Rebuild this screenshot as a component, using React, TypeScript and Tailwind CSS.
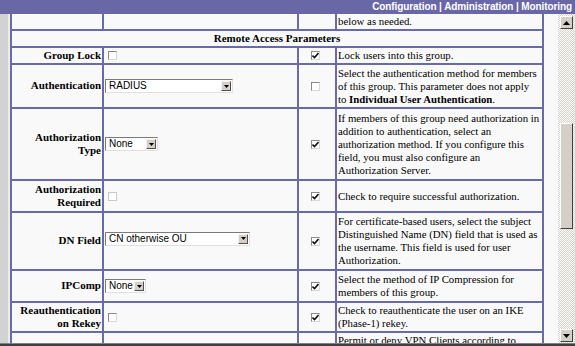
import type { ReactNode } from 'react'

const SERIF = "font-['Liberation_Serif','Times_New_Roman',serif]"
const SANS = "font-['Liberation_Sans',Arial,sans-serif]"

function Box({ checked = false, dim = false }: { checked?: boolean; dim?: boolean }) {
  return (
    <span
      className={`inline-flex w-[9px] h-[9px] border ${
        dim ? 'border-[#c8c8c8]' : 'border-t-[#8a8a8a] border-l-[#8a8a8a] border-b-[#d8d8d8] border-r-[#d8d8d8]'
      } bg-white items-center justify-center`}
    >
      {checked && (
        <svg width="7" height="7" viewBox="0 0 7 7">
          <path d="M0.5 3.5 L2.5 5.5 L6.5 1" stroke="#111" strokeWidth="1.6" fill="none" />
        </svg>
      )}
    </span>
  )
}

function Sel({ value, w }: { value: string; w: string }) {
  return (
    <div className={`${w} h-[14px] flex items-stretch bg-white border border-t-[#7a7a7a] border-l-[#7a7a7a] border-b-[#e0e0e0] border-r-[#e0e0e0]`}>
      <span className={`${SANS} flex-1 text-[10px] leading-[12px] pl-[3px] text-black whitespace-nowrap overflow-hidden`}>{value}</span>
      <span className="w-[10px] my-[1px] mr-[1px] bg-[#d4d0c8] border border-t-[#f4f4f4] border-l-[#f4f4f4] border-b-[#505050] border-r-[#505050] flex items-center justify-center">
        <svg width="5" height="3" viewBox="0 0 5 3">
          <path d="M0 0 H5 L2.5 3 Z" fill="#000" />
        </svg>
      </span>
    </div>
  )
}

type Row = {
  label: string[]
  h: string
  input: ReactNode
  inherit: boolean
  desc: ReactNode[]
}

const rows: Row[] = [
  {
    label: ['Group Lock'],
    h: 'h-[15px]',
    input: <span className="pl-[4px] flex"><Box /></span>,
    inherit: true,
    desc: ['Lock users into this group.'],
  },
  {
    label: ['Authentication'],
    h: 'h-[42px]',
    input: <span className="pl-[1px] flex"><Sel value="RADIUS" w="w-[128px]" /></span>,
    inherit: false,
    desc: [
      'Select the authentication method for members',
      'of this group. This parameter does not apply',
      <>to <b>Individual User Authentication</b>.</>,
    ],
  },
  {
    label: ['Authorization', 'Type'],
    h: 'h-[70px]',
    input: <span className="pl-[1px] flex"><Sel value="None" w="w-[53px]" /></span>,
    inherit: true,
    desc: [
      'If members of this group need authorization in',
      'addition to authentication, select an',
      'authorization method. If you configure this',
      'field, you must also configure an',
      'Authorization Server.',
    ],
  },
  {
    label: ['Authorization', 'Required'],
    h: 'h-[30px]',
    input: <span className="pl-[4px] flex"><Box dim /></span>,
    inherit: true,
    desc: ['Check to require successful authorization.'],
  },
  {
    label: ['DN Field'],
    h: 'h-[56px]',
    input: <span className="pl-[1px] pb-[5px] flex"><Sel value="CN otherwise OU" w="w-[145px]" /></span>,
    inherit: true,
    desc: [
      'For certificate-based users, select the subject',
      'Distinguished Name (DN) field that is used as',
      'the username. This field is used for user',
      'Authorization.',
    ],
  },
  {
    label: ['IPComp'],
    h: 'h-[30px]',
    input: <span className="pl-[1px] flex"><Sel value="None" w="w-[41px]" /></span>,
    inherit: true,
    desc: ['Select the method of IP Compression for', 'members of this group.'],
  },
  {
    label: ['Reauthentication', 'on Rekey'],
    h: 'h-[28px]',
    input: <span className="pl-[4px] flex"><Box /></span>,
    inherit: true,
    desc: ['Check to reauthenticate the user on an IKE', '(Phase-1) rekey.'],
  },
]

const cell = 'bg-[#f9f9f9]'
const descText = `${SERIF} text-[10.8px] leading-[13px] pl-[1px] whitespace-nowrap`
const labelText = `${SERIF} text-[11px] leading-[13.5px] font-bold`

function ScrollButton({ up }: { up: boolean }) {
  return (
    <div className="h-[13px] mx-[2px] bg-[#d4d0c8] border border-t-white border-l-white border-b-[#404040] border-r-[#404040] flex items-center justify-center">
      <svg width="7" height="4" viewBox="0 0 7 4">
        <path d={up ? 'M0 4 H7 L3.5 0 Z' : 'M0 0 H7 L3.5 4 Z'} fill="#000" />
      </svg>
    </div>
  )
}

export default function App() {
  return (
    <div className="w-[575px] h-[346px] flex flex-col bg-[#f9f9f9] overflow-hidden">
      {/* top menu bar */}
      <div className="h-[14px] bg-[#6a67a6] flex items-center justify-end pr-[3px]">
        <span className={`${SANS} text-[10px] font-bold text-white leading-none tracking-[-0.1px]`}>
          Configuration | Administration | Monitoring
        </span>
      </div>

      <div className="h-[329px] flex">
        {/* frame content */}
        <div className="flex-1 flex flex-col overflow-hidden">
          <div className="h-[2px] flex">
            <div className="w-[192px] bg-[#dcdcdc]" />
          </div>
          <div className="flex-1 flex">
            <div className="w-[10px] flex">
              <div className="w-[8px] bg-[#d2d2d2]" />
              <div className="w-[2px] bg-[#ececec]" />
            </div>
            <div className="text-black">
              <div className="grid grid-cols-[90px_193px_36px_205px] gap-[2px] px-[2px] bg-[#6a6aa6]">
                {/* tail of previous row */}
                <div className={`${cell} h-[15px]`} />
                <div className={cell} />
                <div className={cell} />
                <div className={`${cell} ${descText} pt-[1px]`}>below as needed.</div>

                {/* section header */}
                <div className={`${cell} ${labelText} col-span-4 h-[15px] text-center leading-[15px]`}>
                  Remote Access Parameters
                </div>

                {rows.map((r) => (
                  <>
                    <div key={r.label[0] + 'l'} className={`${cell} ${labelText} ${r.h} flex flex-col justify-center items-end text-right pr-[1px] whitespace-nowrap`}>
                      {r.label.map((l) => (
                        <span key={l}>{l}</span>
                      ))}
                    </div>
                    <div key={r.label[0] + 'i'} className={`${cell} flex items-center`}>
                      {r.input}
                    </div>
                    <div key={r.label[0] + 'c'} className={`${cell} flex items-center justify-center pr-[4px]`}>
                      <Box checked={r.inherit} />
                    </div>
                    <div key={r.label[0] + 'd'} className={`${cell} ${descText} flex flex-col justify-center`}>
                      {r.desc.map((d, i) => (
                        <span key={i}>{d}</span>
                      ))}
                    </div>
                  </>
                ))}

                {/* next row, cut by the frame */}
                <div className={`${cell} h-[30px]`} />
                <div className={cell} />
                <div className={cell} />
                <div className={`${cell} ${descText} pt-[1px]`}>Permit or deny VPN Clients according to</div>
              </div>
            </div>
          </div>
        </div>

        {/* scrollbar */}
        <div className="w-[17px] flex flex-col bg-[repeating-conic-gradient(#d4d0c8_0_25%,#ffffff_0_50%)] bg-[length:2px_2px] pt-[2px] pb-[1px]">
          <ScrollButton up />
          <div className="h-[94px]" />
          <div className="h-[106px] mx-[2px] bg-[#d4d0c8] border border-t-white border-l-white border-b-[#404040] border-r-[#404040]" />
          <div className="flex-1" />
          <ScrollButton up={false} />
        </div>
      </div>

      <div className="h-[3px] bg-[#404040] border-t border-[#808080]" />
    </div>
  )
}
